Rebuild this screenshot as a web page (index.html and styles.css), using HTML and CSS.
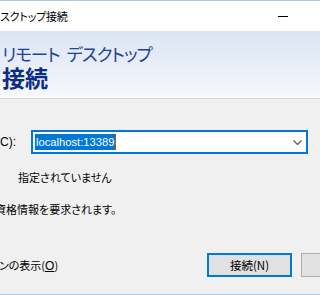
FILE: index.html
```html
<!DOCTYPE html>
<html lang="ja">
<head>
    <meta charset="UTF-8">
    <meta name="viewport" content="width=device-width, initial-scale=1.0">
    <title>リモート デスクトップ接続</title>
    <link rel="stylesheet" href="styles.css">
</head>
<body>
    <div class="window">
        <div class="titlebar">
            <span class="title">スクトップ接続</span>
            <span class="minimize"></span>
        </div>

        <div class="banner">
            <div class="banner-sub">リモート デスクトップ</div>
            <div class="banner-main">接続</div>
        </div>

        <div class="content">
            <div class="field-row">
                <label class="field-label" for="computer">C):</label>
                <div class="combo" id="computer">
                    <span class="combo-value">localhost:13389</span>
                    <svg class="combo-arrow" width="9" height="5" viewBox="0 0 9 5">
                        <polyline points="0.5,0.5 4.5,4.5 8.5,0.5" fill="none" stroke="#5a5a5a" stroke-width="1.2"/>
                    </svg>
                </div>
            </div>

            <div class="hint">指定されていません</div>

            <div class="note">資格情報を要求されます。</div>

            <div class="actions">
                <span class="options">ンの表示(<u>O</u>)</span>
                <div class="buttons">
                    <button class="btn btn-primary">接続(N)</button>
                    <button class="btn" aria-label="ヘルプ"></button>
                </div>
            </div>
        </div>
    </div>
</body>
</html>
```

FILE: styles.css
```css
* {
    margin: 0;
    padding: 0;
    box-sizing: border-box;
}

body {
    width: 320px;
    height: 295px;
    overflow: hidden;
    background-color: #f0f0f0;
    font-family: "Liberation Sans", "Noto Sans CJK JP", sans-serif;
    font-size: 12px;
    color: #000;
}

.window {
    height: 295px;
    display: flex;
    flex-direction: column;
    border-top: 1px solid #a9cbe9;
    border-bottom: 1px solid #a9cbe9;
    overflow: hidden;
}

/* タイトルバー */
.titlebar {
    flex-shrink: 0;
    height: 30px;
    background-color: #ffffff;
    display: flex;
    align-items: center;
    justify-content: space-between;
    padding-right: 32px;
}

.title {
    font-family: "Noto Sans CJK JP", sans-serif;
    font-feature-settings: "palt";
    font-size: 11px;
    letter-spacing: -0.2px;
    white-space: nowrap;
}

.minimize {
    width: 10px;
    height: 1px;
    background-color: #000;
}

/* バナー */
.banner {
    flex-shrink: 0;
    height: 68px;
    padding: 12px 0 0 2px;
    background: linear-gradient(to bottom, #dbe5f3 0%, #e8eef8 50%, #f7f9fb 100%);
    border-bottom: 1px solid #dcdcdc;
    font-family: "Noto Sans CJK JP", sans-serif;
    font-feature-settings: "palt";
    white-space: nowrap;
}

.banner-sub {
    font-size: 17.5px;
    line-height: 21px;
    letter-spacing: -1px;
    word-spacing: 4px;
    color: #1e4399;
}

.banner-main {
    font-size: 23px;
    line-height: 27px;
    font-weight: bold;
    color: #0b2d88;
}

/* 本文 */
.content {
    flex: 1;
    padding-top: 31px;
    white-space: nowrap;
}

.field-row {
    display: flex;
    align-items: center;
}

.field-label {
    width: 31px;
    font-size: 12px;
}

.combo {
    width: 277px;
    height: 24px;
    background-color: #fff;
    border: 2px solid #0078d7;
    display: flex;
    align-items: center;
    justify-content: space-between;
    padding: 0 4px 0 2px;
}

.combo-value {
    background-color: #0078d7;
    color: #fff;
    font-size: 11.2px;
    line-height: 16px;
    padding: 0 1px;
    border-right: 1px solid #b35a00;
}

.combo-arrow {
    display: block;
}

.hint {
    margin: 15px 0 0 18px;
    font-size: 11px;
    line-height: 16px;
    font-family: "Noto Sans CJK JP", sans-serif;
    font-feature-settings: "palt";
}

.note {
    margin: 16px 0 0 -5px;
    font-size: 11px;
    line-height: 16px;
    font-family: "Noto Sans CJK JP", sans-serif;
    font-feature-settings: "palt";
}

.actions {
    margin-top: 36px;
    display: flex;
    align-items: center;
    justify-content: space-between;
}

.options {
    font-family: "Noto Sans CJK JP", sans-serif;
    font-feature-settings: "palt";
    font-size: 11px;
    margin-left: -1px;
}

.options u {
    font-family: "Liberation Sans", sans-serif;
    font-size: 12px;
}

.buttons {
    flex-shrink: 0;
    display: flex;
    gap: 9px;
    margin-right: -66px;
}

.btn {
    width: 85px;
    height: 24px;
    background-color: #e1e1e1;
    border: 1px solid #adadad;
    font-family: "Noto Sans CJK JP", sans-serif;
    font-size: 11.5px;
    color: #000;
}

.btn-primary {
    border: 2px solid #0078d7;
}
```
